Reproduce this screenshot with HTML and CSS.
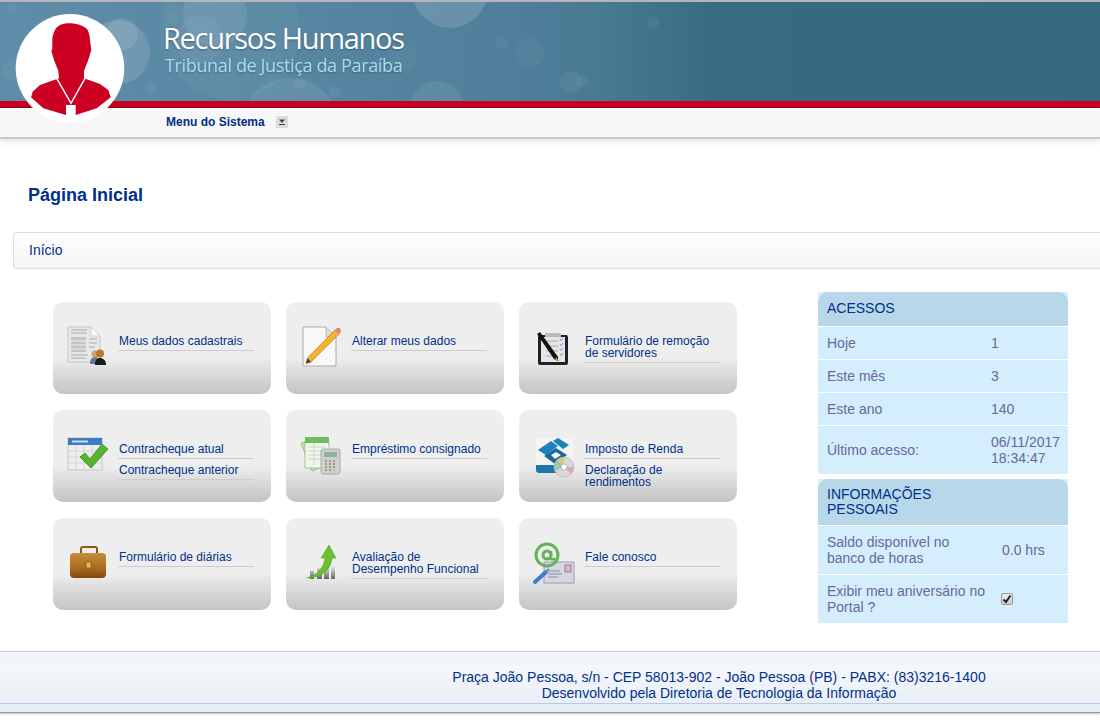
FILE: index.html
```html
<!DOCTYPE html>
<html>
<head lang="pt-BR">
    <meta charset="UTF-8">
    <title>Recursos Humanos</title>
    <link rel="stylesheet" href="styles.css">
</head>
<body>
<div id="header">
    <div class="banner">
        <svg class="bubbles" width="1100" height="99" viewBox="0 2 1100 99">
            <g fill="#fff" fill-opacity=".05">
                <circle cx="450" cy="-10" r="38" fill-opacity=".14"/>
                <circle cx="215" cy="14" r="32" fill-opacity=".09"/>
                <circle cx="200" cy="40" r="24"/>
                <circle cx="118" cy="52" r="32" fill-opacity=".13"/>
                <circle cx="122" cy="34" r="16" fill-opacity=".1"/>
                <circle cx="437" cy="108" r="27" fill-opacity=".08"/>
                <circle cx="290" cy="128" r="50" fill-opacity=".08"/>
                <circle cx="230" cy="30" r="70" fill-opacity=".04"/>
                <circle cx="403" cy="57" r="14" fill-opacity=".03"/>
                <circle cx="12" cy="9" r="6"/>
                <circle cx="12" cy="70" r="10"/>
                <circle cx="150" cy="87" r="6"/>
                <circle cx="172" cy="18" r="6"/>
                <circle cx="502" cy="43" r="6"/>
                <circle cx="530" cy="53" r="15" fill-opacity=".04"/>
                <circle cx="300" cy="83" r="6"/>
                <circle cx="335" cy="92" r="6"/>
                <circle cx="653" cy="22" r="6"/>
                <circle cx="571" cy="82" r="11"/>
                <circle cx="582" cy="81" r="6"/>
            </g>
        </svg>
        <div class="brand">
            <h1>Recursos Humanos</h1>
            <p>Tribunal de Justiça da Paraíba</p>
        </div>
    </div>
    <div class="redline"></div>
    <div class="menubar">
        <a class="menu-link" href="#">Menu do Sistema</a>
        <span class="menu-arrow">
            <svg width="12" height="12" viewBox="0 0 12 12"><path d="M3 3.500h6L6 7z" fill="#444"/><path d="M3 8.500h6" stroke="#444"/></svg>
        </span>
    </div>
    <svg class="avatar" width="110" height="110" viewBox="0 0 110 110">
        <circle cx="55" cy="54.300" r="54.300" fill="#fff"/>
        <path d="M54.300 9.300C47 9.300 42 12 40 16C38 20 37.300 23 37.300 26L37.300 35.300L36.300 36.700L39 46L43.300 56.700L44 64.300L25 71L17.700 77.700L16 83.300L28.300 94.300L51 101L51 91L60.700 91L60.700 101L81.700 94.300L95.700 83.300L93.300 76L85 70L69 64.300L69 56.700L73.300 46L76.300 36L75 26C75 23 74 19 72.700 16C70 12 61 9.300 54.300 9.300Z" fill="#cc0022"/>
        <path d="M41.700 64.300L56 89.300L70 64.300" fill="none" stroke="#fff" stroke-width="1.500"/>
    </svg>
</div>
<div id="main">
    <h2 class="page-title">Página Inicial</h2>
    <div class="crumb"><a href="#">Início</a></div>
    <div class="content">
        <div class="cards">
            <div class="card">
                <svg class="icon" width="48" height="48" viewBox="0 0 48 48">
                    <path d="M4 3H27L36 12V38H4Z" fill="#e8e8e8" stroke="#c4c4c4"/>
                    <path d="M27 3V12H36Z" fill="#fff" stroke="#ccc"/>
                    <path d="M7 6H23M7 9H23M25 15H33M25 19H33M25 23H31M7 31H24M7 34H22" stroke="#a8a8a8"/>
                    <rect x="7" y="13" width="15" height="15" fill="#c4c4c4"/>
                    <path d="M7 17H22M7 21H22M7 25H22" stroke="#eee"/>
                    <path d="M26 40C26 35 28 33 31 33C34 33 36 35 36 40Z" fill="#66749a"/>
                    <circle cx="31" cy="30" r="3.500" fill="#d0a264"/>
                    <path d="M31 41C31 36 33 34 36 34C39 34 42 36 42 41Z" fill="#1c1c1c"/>
                    <circle cx="36" cy="29.500" r="4" fill="#b87b2c"/>
                </svg>
                <div class="links">
                    <a href="#">Meus dados cadastrais</a>
                </div>
            </div>
            <div class="card">
                <svg class="icon" width="48" height="48" viewBox="0 0 48 48">
                    <path d="M6 3H29L39 13V42H6Z" fill="#f8f8f8" stroke="#aaa"/>
                    <path d="M29 3V13H39Z" fill="#ddd" stroke="#bbb"/>
                    <path d="M38 6L42 10L14 38L9 39.500L10.500 34Z" fill="#f2b52c" stroke="#b27c12" stroke-width=".7"/>
                    <path d="M38 6L39.500 4.500C40.500 3.500 42 3.500 43 4.500C44 5.500 44 7.500 43.500 8.500L42 10Z" fill="#e5836f"/>
                    <path d="M10.500 34L9 39.500L14 38Z" fill="#4a4036"/>
                </svg>
                <div class="links">
                    <a href="#">Alterar meus dados</a>
                </div>
            </div>
            <div class="card">
                <svg class="icon" width="48" height="48" viewBox="0 0 48 48">
                    <rect x="8" y="11" width="30" height="30" rx="2" fill="#222"/>
                    <rect x="11" y="13" width="24" height="25" fill="#e6e6e6"/>
                    <rect x="15" y="9" width="16" height="4" rx="1" fill="#bbb"/>
                    <path d="M16 17H28M16 22H28M16 27H28M16 32H28" stroke="#aab"/>
                    <path d="M30 15l1 1.500 2-2.500M30 20l1 1.500 2-2.500M30 25l1 1.500 2-2.500M30 30l1 1.500 2-2.500" stroke="#7a9ccc" fill="none"/>
                    <path d="M7 10L10 8L28 33L28 37L24 35Z" fill="#111"/>
                    <path d="M26 33L29 37L25 36Z" fill="#b68a3a"/>
                </svg>
                <div class="links">
                    <a href="#">Formulário de remoção de servidores</a>
                </div>
            </div>
            <div class="card">
                <svg class="icon" width="48" height="48" viewBox="0 0 48 48">
                    <rect x="4" y="6" width="34" height="32" fill="#eee" stroke="#c4c4c4"/>
                    <rect x="4" y="6" width="34" height="7" fill="#3b7cc4"/>
                    <path d="M8 9.500H24" stroke="#cfe2f5" stroke-width="2"/>
                    <path d="M4 19H38M4 25H38M4 31H38M12 13V38M20 13V38M28 13V38" stroke="#d4d4d4"/>
                    <path d="M16 25L21 21L26 27L38 12L44 17L27 36Z" fill="#55b52c" stroke="#3a8a1a" stroke-width=".8"/>
                </svg>
                <div class="links">
                    <a href="#">Contracheque atual</a>
                    <a href="#">Contracheque anterior</a>
                </div>
            </div>
            <div class="card">
                <svg class="icon" width="48" height="48" viewBox="0 0 48 48">
                    <path d="M4 11L25 5L33 32L15 39Z" fill="#bfe3b4" stroke="#8cc47f"/>
                    <path d="M8 10H32V36H8Z" fill="#f2f6ee" stroke="#9ac98d"/>
                    <rect x="8" y="5" width="24" height="6" fill="#6fbd5f"/>
                    <path d="M11 15H29M11 19H29M11 23H29M11 27H29M17 11V33" stroke="#c8d8c4"/>
                    <rect x="24" y="17" width="19" height="25" rx="2" fill="#cfd2cc" stroke="#aaa"/>
                    <rect x="27" y="20" width="13" height="5" fill="#8fb29a"/>
                    <path d="M28 29h2M32 29h2M36 29h2M28 32h2M32 32h2M28 35h2M32 35h2M36 35h2M28 38h2M32 38h2" stroke="#888" stroke-width="1.500"/>
                    <path d="M36 32h2" stroke="#d55" stroke-width="1.500"/>
                    <path d="M36 38h2" stroke="#db3" stroke-width="1.500"/>
                </svg>
                <div class="links">
                    <a href="#">Empréstimo consignado</a>
                </div>
            </div>
            <div class="card">
                <svg class="icon" width="48" height="48" viewBox="0 0 48 48">
                    <rect x="6" y="6" width="37" height="35" rx="3" fill="#f4f4f4"/>
                    <path d="M6 33H30V41H9C7 41 6 40 6 38Z" fill="#1d78a8"/>
                    <path d="M8 18L21 9L28 14L16 23Z" fill="#1d80b8"/>
                    <path d="M23 9L28 6L39 13L33 17Z" fill="#1d80b8"/>
                    <path d="M14 24L26 16L37 23L25 32Z" fill="#1468a0"/>
                    <path d="M21 23L26 20L31 23L25 27Z" fill="#f4f4f4"/>
                    <circle cx="34" cy="35" r="10" fill="#d8d8d8" stroke="#aaa" stroke-width=".6"/>
                    <path d="M34 35L27 28A10 10 0 0 1 34 25Z" fill="#d9c77a"/>
                    <path d="M34 35L25 39A10 10 0 0 1 27 28Z" fill="#9cc9a8"/>
                    <path d="M34 35L41 42A10 10 0 0 0 44 35Z" fill="#d6a8c8"/>
                    <circle cx="34" cy="35" r="3" fill="#fff" stroke="#999" stroke-width=".6"/>
                </svg>
                <div class="links">
                    <a href="#">Imposto de Renda</a>
                    <a href="#">Declaração de rendimentos</a>
                </div>
            </div>
            <div class="card">
                <svg class="icon" width="48" height="48" viewBox="0 0 48 48">
                    <defs>
                        <linearGradient id="caseFill" x1="0" y1="0" x2="0" y2="1">
                            <stop offset="0" stop-color="#c88c3c"/>
                            <stop offset=".6" stop-color="#a96c20"/>
                            <stop offset="1" stop-color="#7c4a0c"/>
                        </linearGradient>
                    </defs>
                    <path d="M17 14V9C17 7.500 18 7 19 7H31C32 7 33 7.500 33 9V14" fill="none" stroke="#8a5a1c" stroke-width="2"/>
                    <rect x="6" y="13" width="36" height="25" rx="4" fill="url(#caseFill)"/>
                    <rect x="22" y="22" width="5" height="6" rx="1" fill="#e8b95a" stroke="#7c4a0c" stroke-width=".7"/>
                </svg>
                <div class="links">
                    <a href="#">Formulário de diárias</a>
                </div>
            </div>
            <div class="card">
                <svg class="icon" width="48" height="48" viewBox="0 0 48 48">
                    <defs>
                        <linearGradient id="barFill" x1="0" y1="0" x2="0" y2="1">
                            <stop offset="0" stop-color="#f5f5f5"/>
                            <stop offset="1" stop-color="#666"/>
                        </linearGradient>
                    </defs>
                    <path d="M13 31h4v8h-4zM20 28h5v11h-5zM27 25h5v14h-5zM34 25h4v14h-4z" fill="url(#barFill)"/>
                    <path d="M10 38C20 35 27 28 28 18L24 18L32 5L39 18L35 18C34 30 24 38 10 38Z" fill="#6cbf2e" stroke="#4b9a1c" stroke-width=".5"/>
                </svg>
                <div class="links">
                    <a href="#">Avaliação de Desempenho Funcional</a>
                </div>
            </div>
            <div class="card">
                <svg class="icon" width="48" height="48" viewBox="0 0 48 48">
                    <rect x="14" y="22" width="30" height="21" fill="#d5d7e4" stroke="#9a9cb0"/>
                    <path d="M18 31H30M18 34H32M18 37H28" stroke="#8a8ca0"/>
                    <rect x="35" y="25" width="6" height="7" fill="#b9c3d8" stroke="#c03030" stroke-width=".6"/>
                    <circle cx="17" cy="15" r="11" fill="none" stroke="#62b35a" stroke-width="3"/>
                    <circle cx="17" cy="15" r="4" fill="none" stroke="#62b35a" stroke-width="3"/>
                    <path d="M21 11V18C21 20 24 20 25 18" fill="none" stroke="#62b35a" stroke-width="2.500"/>
                    <path d="M5 42L16 32" stroke="#3b7cd0" stroke-width="4" stroke-linecap="round"/>
                    <path d="M16 32L19 29" stroke="#888" stroke-width="2"/>
                </svg>
                <div class="links">
                    <a href="#">Fale conosco</a>
                </div>
            </div>
        </div>
        <div class="side">
            <div class="panel">
                <div class="panel-head short">ACESSOS</div>
                <div class="panel-row"><span>Hoje</span><span>1</span></div>
                <div class="panel-row"><span>Este mês</span><span>3</span></div>
                <div class="panel-row"><span>Este ano</span><span>140</span></div>
                <div class="panel-row tall"><span>Último acesso:</span><span>06/11/2017 18:34:47</span></div>
            </div>
            <div class="panel">
                <div class="panel-head">INFORMAÇÕES PESSOAIS</div>
                <div class="panel-row wide"><span>Saldo disponível no banco de horas</span><span>0.0 hrs</span></div>
                <div class="panel-row wide"><span>Exibir meu aniversário no Portal ?</span><span class="check"><svg width="12" height="12" viewBox="0 0 12 12"><path d="M2.500 6.500L5 9L9.500 2.500" fill="none" stroke="#222" stroke-width="2"/></svg></span></div>
            </div>
        </div>
    </div>
</div>
<div id="footer">
    <div class="foot-top"></div>
    <div class="foot-text">
        <p>Praça João Pessoa, s/n - CEP 58013-902 - João Pessoa (PB) - PABX: (83)3216-1400</p>
        <p>Desenvolvido pela Diretoria de Tecnologia da Informação</p>
    </div>
    <div class="foot-bottom"></div>
</div>
</body>
</html>
```

FILE: styles.css
```css
*{
    margin: 0;
    padding: 0;
    box-sizing: border-box;
}
html,body{
    height: 720px;
    overflow: hidden;
    background: #fff;
    font-family: "Liberation Sans", Arial, sans-serif;
}
a{
    color: #00308a;
    text-decoration: none;
}
#header{
    position: relative;
}
.banner{
    position: relative;
    height: 101px;
    overflow: hidden;
    border-top: 2px solid #b4b6b8;
    background: linear-gradient(90deg, #5e8ca9 0, #5786a2 300px, #4f7f9a 500px, #497a94 600px, #386a83 720px, #366980 1100px);
}
.bubbles{
    position: absolute;
    left: 0;
    top: 0;
}
.brand{
    position: relative;
    padding: 18px 0 0 163px;
    font-family: "Open Sans", sans-serif;
}
.brand h1{
    font-size: 29px;
    line-height: 36px;
    font-weight: 400;
    letter-spacing: -1.3px;
    color: #fff;
    text-shadow: 0 1px 2px rgba(0,0,0,.3);
}
.brand p{
    margin-left: 2px;
    font-size: 18px;
    line-height: 19px;
    letter-spacing: -0.36px;
    color: #a9dcec;
    text-shadow: 0 1px 2px rgba(0,0,0,.25);
}
.redline{
    height: 7px;
    background: #cc0022;
    border-bottom: 1px solid #8e0a20;
}
.menubar{
    display: flex;
    align-items: center;
    height: 31px;
    padding: 0 0 2px 166px;
    background: #f7f7f7;
    border-bottom: 2px solid #c9c9c9;
    box-shadow: 0 1px 7px rgba(0,0,0,.16);
}
.menu-link{
    font-size: 12px;
    font-weight: bold;
}
.menu-arrow{
    display: flex;
    width: 12px;
    height: 12px;
    margin-left: 11px;
    background: #dcdcdc;
}
.avatar{
    position: absolute;
    left: 15px;
    top: 14px;
}
.page-title{
    margin: 45px 0 0 28px;
    font-size: 18px;
    line-height: 22px;
    color: #00308a;
}
.crumb{
    height: 37px;
    margin: 26px -10px 0 13px;
    padding-left: 15px;
    border: 1px solid #ddd;
    border-radius: 3px;
    background: linear-gradient(#fff, #f5f5f5);
    font-size: 14px;
    line-height: 34px;
}
.content{
    display: flex;
    align-items: flex-start;
    padding: 23px 0 0 53px;
}
.cards{
    display: grid;
    grid-template-columns: repeat(3, 218px);
    grid-auto-rows: 92px;
    gap: 16px 15px;
    margin-top: 10px;
}
.card{
    display: flex;
    align-items: flex-start;
    padding: 22px 17px 0 11px;
    border-radius: 10px;
    background: linear-gradient(#eee 0, #eee 60%, #c4c4c4 100%);
}
.icon{
    flex: none;
    margin-right: 6px;
}
.links{
    width: 136px;
    padding-top: 11px;
}
.links a{
    display: block;
    padding: 0 0 3px 1px;
    border-bottom: 1px solid #ccc;
    font-size: 12px;
    line-height: 12px;
}
.links a + a{
    padding-top: 5px;
}
.side{
    width: 250px;
    margin-left: 81px;
}
.panel{
    margin-bottom: 5px;
    background: #d4eefe;
    font-size: 14px;
    color: #68689a;
}
.panel-head{
    min-height: 35px;
    padding: 8px 100px 8px 9px;
    border-radius: 10px 10px 0 0;
    border-bottom: 1px solid #fff;
    background: #b8d8ea;
    line-height: 15px;
    color: #00308a;
}
.panel-head.short{
    padding-top: 9px;
}
.panel-row{
    display: grid;
    grid-template-columns: 164px 1fr;
    align-items: center;
    height: 33px;
    padding-left: 9px;
    border-bottom: 1px solid #fff;
    line-height: 16px;
}
.panel-row:last-child{
    border-bottom: 0;
}
.panel-row span:first-child{
    padding-right: 12px;
}
.panel-row.tall{
    height: 48px;
}
.panel-row.wide{
    grid-template-columns: 175px 1fr;
    height: 49px;
}
.panel-row.wide:last-child{
    height: 48px;
}
.check{
    display: flex;
    width: 12px;
    height: 12px;
    margin-left: -1px;
    border: 1px solid #999;
    border-radius: 2px;
    background: linear-gradient(#eee, #ccc);
}
.check svg{
    margin: -1px;
}
#footer{
    margin-top: 23px;
    border-top: 1px solid #c6d3e8;
    border-bottom: 1px solid #999;
    background: linear-gradient(#f9fbfd, #e6ecf6);
    box-shadow: 0 1px 2px rgba(0,0,0,.25);
    font-size: 14px;
    color: #00308a;
}
.foot-top{
    height: 13px;
    background: #f1f5fa;
}
.foot-text{
    height: 38px;
    padding: 4px 0 0 338px;
    text-align: center;
    line-height: 16px;
}
.foot-bottom{
    height: 9px;
    border-top: 1px solid #b5cbe6;
    background: #e8eff8;
}
```
